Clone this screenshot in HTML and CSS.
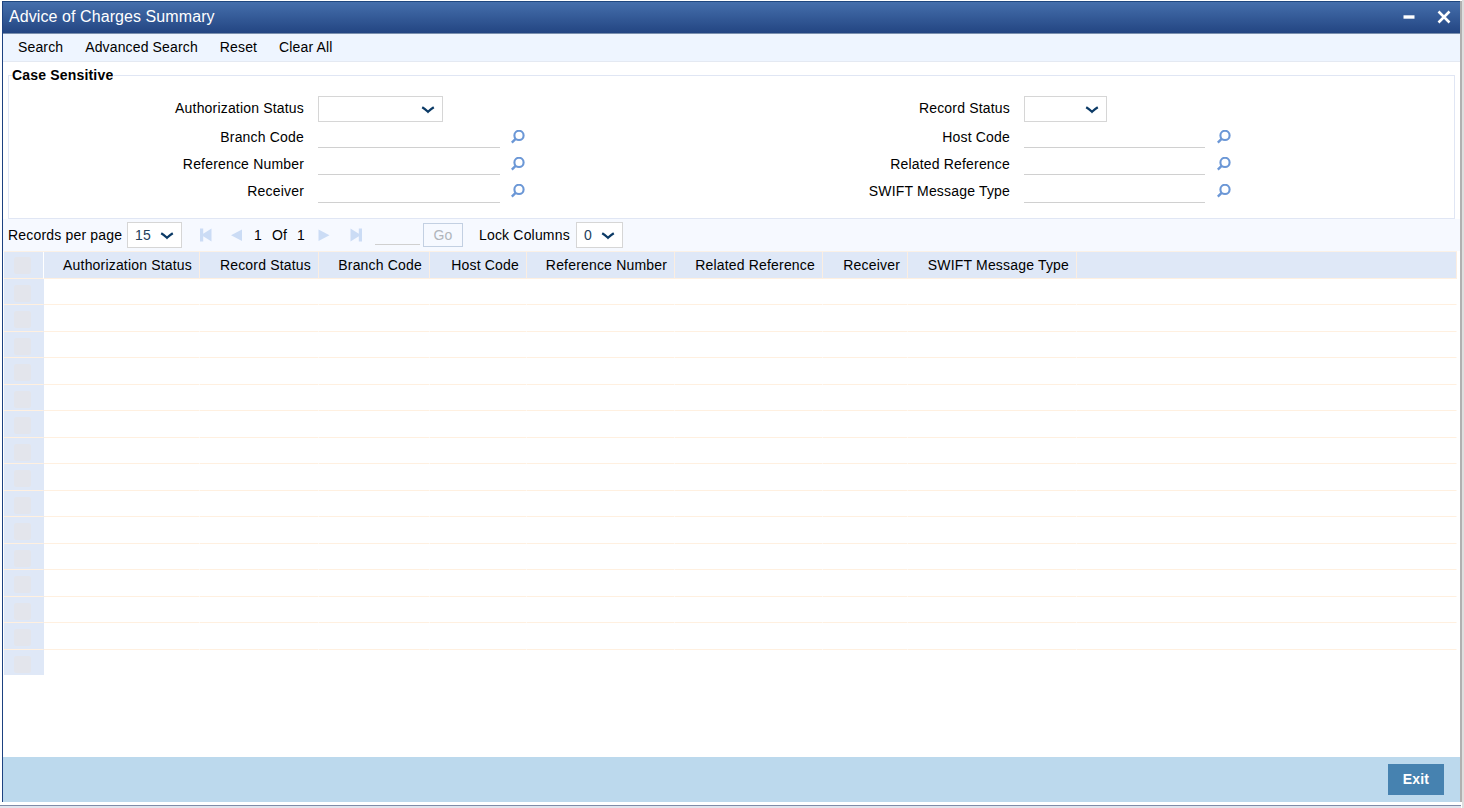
FILE: index.html
```html
<!DOCTYPE html>
<html lang="en">
<head>
    <meta charset="UTF-8">
    <title>Advice of Charges Summary</title>
    <link rel="stylesheet" href="styles.css">
</head>
<body>
    <svg width="0" height="0" class="sprite">
        <symbol id="chevron" viewBox="0 0 14 8">
            <path d="M1.2 1.2 Q4.5 3.2 7 5.8 Q9.5 3.2 12.8 1.2" fill="none" stroke="#0b3a66" stroke-width="2.2"/>
        </symbol>
        <symbol id="lens" viewBox="0 0 14 14">
            <circle cx="8" cy="5.4" r="4.6" fill="none" stroke="#6b97d6" stroke-width="2.1"/>
            <path d="M4.6 8.8 L.8 12.6" stroke="#6b97d6" stroke-width="2.4"/>
        </symbol>
    </svg>

    <div class="window">
        <div class="title-bar">
            <h1>Advice of Charges Summary</h1>
            <div class="window-buttons">
                <svg width="12" height="14" viewBox="0 0 12 14"><path d="M.5 7h11" stroke="#fff" stroke-width="3.4"/></svg>
                <svg width="14" height="14" viewBox="0 0 14 14"><path d="M1.5 1.5l11 11M12.5 1.5l-11 11" stroke="#fff" stroke-width="2.6"/></svg>
            </div>
        </div>

        <div class="menu">
            <a>Search</a>
            <a>Advanced Search</a>
            <a>Reset</a>
            <a>Clear All</a>
        </div>

        <!-- Search criteria -->
        <div class="criteria">
            <div class="legend">Case Sensitive</div>
            <div class="fields">
                <div class="column">
                    <div class="field first"><label>Authorization Status</label><span class="select wide"><svg class="chevron"><use href="#chevron"/></svg></span></div>
                    <div class="field"><label>Branch Code</label><input type="text"><svg class="lens"><use href="#lens"/></svg></div>
                    <div class="field"><label>Reference Number</label><input type="text"><svg class="lens"><use href="#lens"/></svg></div>
                    <div class="field last"><label>Receiver</label><input type="text"><svg class="lens"><use href="#lens"/></svg></div>
                </div>
                <div class="column right">
                    <div class="field first"><label>Record Status</label><span class="select medium"><svg class="chevron"><use href="#chevron"/></svg></span></div>
                    <div class="field"><label>Host Code</label><input type="text"><svg class="lens"><use href="#lens"/></svg></div>
                    <div class="field"><label>Related Reference</label><input type="text"><svg class="lens"><use href="#lens"/></svg></div>
                    <div class="field last"><label>SWIFT Message Type</label><input type="text"><svg class="lens"><use href="#lens"/></svg></div>
                </div>
            </div>
        </div>

        <!-- Paging -->
        <div class="paging">
            <label class="per-page">Records per page</label>
            <span class="select size">15<svg class="chevron"><use href="#chevron"/></svg></span>
            <svg class="arrow first-page" viewBox="0 0 12 14"><path d="M0 .5h3.2v5.2L11.5 .5v13L3.2 8.3v5.2H0z"/></svg>
            <svg class="arrow prev-page" viewBox="0 0 12 14"><path d="M11 1.5v11.5L0 7.3z"/></svg>
            <span class="pages"><span>1</span><span>Of</span><span>1</span></span>
            <svg class="arrow next-page" viewBox="0 0 12 14"><path d="M.5 1.5v11.5L11.5 7.3z"/></svg>
            <svg class="arrow last-page" viewBox="0 0 12 14"><path d="M12 .5H8.8v5.2L.5 .5v13l8.3-5.2v5.2H12z"/></svg>
            <input type="text" class="page-input">
            <button class="go" disabled>Go</button>
            <label class="lock">Lock Columns</label>
            <span class="select lock-select">0<svg class="chevron"><use href="#chevron"/></svg></span>
        </div>

        <!-- Results -->
        <div class="results" id="results">
            <div class="row head">
                <div class="check"><i></i></div>
                <div>Authorization Status</div>
                <div>Record Status</div>
                <div>Branch Code</div>
                <div>Host Code</div>
                <div>Reference Number</div>
                <div>Related Reference</div>
                <div>Receiver</div>
                <div>SWIFT Message Type</div>
                <div></div>
            </div>
        </div>

        <div class="footer">
            <button class="exit">Exit</button>
        </div>
    </div>

    <script>
        const results = document.getElementById('results');
        for (let i = 0; i < 15; i++) {
            const row = document.createElement('div');
            row.className = 'row';
            row.innerHTML = '<div class="check"><i></i></div>' + '<div></div>'.repeat(9);
            results.appendChild(row);
        }
    </script>
</body>
</html>
```
FILE: styles.css
```css
* {
    box-sizing: border-box;
}

html, body {
    margin: 0;
    height: 100%;
    overflow: hidden;
}

body {
    padding: 1px 0 0 2px;
    background-color: #fff;
    border-right: 2px solid #dedede;
    font-family: Arial, "Liberation Sans", sans-serif;
    font-size: 14px;
    letter-spacing: 0.18px;
    color: #000;
    display: flex;
    flex-direction: column;
}

body::after {
    content: "";
    height: 3px;
    margin: 3px 1px 0 -2px;
    border-top: 1px solid #7f8ca8;
    background-color: #e2e5ee;
}

.sprite {
    position: absolute;
}

.window {
    height: 801px;
    flex: none;
    border-left: 1px solid #1d4281;
    border-right: 2px solid #b0b0b0;
    display: flex;
    flex-direction: column;
}

.title-bar {
    height: 33px;
    flex: none;
    padding: 0 9px 2px 6px;
    border-top: 1px solid #1f477f;
    border-bottom: 1px solid #7a8fae;
    background: linear-gradient(#456fac, #234582);
    display: flex;
    justify-content: space-between;
    align-items: center;
}

.title-bar h1 {
    margin: 0;
    font-size: 16px;
    font-weight: normal;
    letter-spacing: 0.08px;
    color: #fff;
}

.window-buttons {
    display: flex;
    gap: 22px;
}

.menu {
    height: 28px;
    flex: none;
    padding: 0 15px 2px;
    background-color: #eef5ff;
    border-bottom: 1px solid #e4e9f2;
    display: flex;
    align-items: center;
    gap: 22px;
    letter-spacing: 0.14px;
}

.criteria {
    height: 144px;
    flex: none;
    margin: 13px 5px 0;
    border: 1px solid #e0e6f4;
}

.legend {
    width: 102px;
    height: 16px;
    margin: -9px 0 0 3px;
    background-color: #fff;
    font-weight: bold;
    letter-spacing: 0.18px;
    line-height: 17px;
    white-space: nowrap;
}

.fields {
    display: flex;
    padding-top: 13px;
}

.column {
    width: 706px;
}

.field {
    height: 27px;
    display: flex;
}

.field.first {
    height: 26px;
    margin-bottom: 2px;
}

.field.last {
    height: 28px;
}

.field label {
    width: 295px;
    margin-right: 14px;
    text-align: right;
    line-height: 24px;
}

.field:not(.first) label {
    line-height: 27px;
}

input {
    width: 182px;
    padding: 0;
    border: 0;
    border-bottom: 1px solid #d0d0d0;
    background: none;
}

.field input {
    margin-bottom: 3px;
}

.right input {
    width: 181px;
}

.lens {
    width: 14px;
    height: 14px;
    margin: 6px 0 0 11px;
}

.right .lens {
    margin-left: 12px;
}

.select {
    height: 26px;
    padding: 0 7px;
    border: 1px solid #d6d6d6;
    background-color: #fff;
    display: flex;
    justify-content: space-between;
    align-items: center;
}

.select .chevron {
    width: 14px;
    height: 8px;
    margin: 2px 0 0 auto;
}

.select.wide {
    width: 125px;
}

.select.medium {
    width: 83px;
}

.paging {
    height: 32px;
    flex: none;
    padding-left: 5px;
    background-color: #f6f9ff;
    display: flex;
    align-items: center;
}

.per-page {
    width: 119px;
}

.select.size {
    width: 55px;
    color: #24405c;
}

.arrow {
    width: 12px;
    height: 14px;
    fill: #cbdcf5;
}

.first-page {
    margin-left: 18px;
}

.prev-page {
    margin-left: 19px;
}

.pages {
    width: 64px;
    margin-left: 11px;
    display: flex;
    gap: 10px;
}

.last-page {
    margin-left: 20px;
}

.page-input {
    width: 45px;
    height: 20px;
    margin-left: 13px;
}

.go {
    width: 40px;
    height: 24px;
    margin: 0 0 0 3px;
    padding: 0;
    border: 1px solid #c3d0e2;
    background: none;
    font: inherit;
    letter-spacing: 0.1px;
    color: #b0b5bb;
}

.lock {
    width: 97px;
    margin-left: 16px;
}

.select.lock-select {
    width: 47px;
    color: #24405c;
}

.results {
    flex: 1;
    padding: 0 3px 0 1px;
}

.row {
    height: 26.5px;
    display: grid;
    grid-template-columns: 40px 156px 119px 111px 97px 148px 148px 85px 169px 1fr;
}

.row > div {
    border-right: 1px solid #fff;
    border-bottom: 1px solid #fff0e0;
}

.row:last-child > div {
    height: 25.5px;
    border-bottom: 0;
}

.row > div.check {
    background-color: #dfe8f7;
    padding: 6px 0 0 10px;
    border-right-color: #dfe8f7;
}

.check i {
    display: block;
    width: 17px;
    height: 17px;
    border-radius: 2px;
    background-color: #e3e5ec;
}

.row.head {
    height: 28px;
    margin-bottom: -0.5px;
    border-top: 1px solid #fbf1e6;
}

.row.head > div {
    padding: 0 7px 0 0;
    border-right-color: #fbeee2;
    background-color: #dfe8f7;
    line-height: 26px;
    text-align: right;
}

.row.head > div.check {
    padding: 5px 0 0 10px;
    border-right-color: #fff;
}

.footer {
    height: 45px;
    flex: none;
    padding: 7px 16px 0 0;
    background-color: #bcd9ed;
    text-align: right;
}

.exit {
    width: 56px;
    height: 31px;
    padding: 0 0 1px;
    border: 0;
    background-color: #4682b0;
    font: bold 14px Arial, "Liberation Sans", sans-serif;
    letter-spacing: 0.15px;
    color: #fff;
}
```
